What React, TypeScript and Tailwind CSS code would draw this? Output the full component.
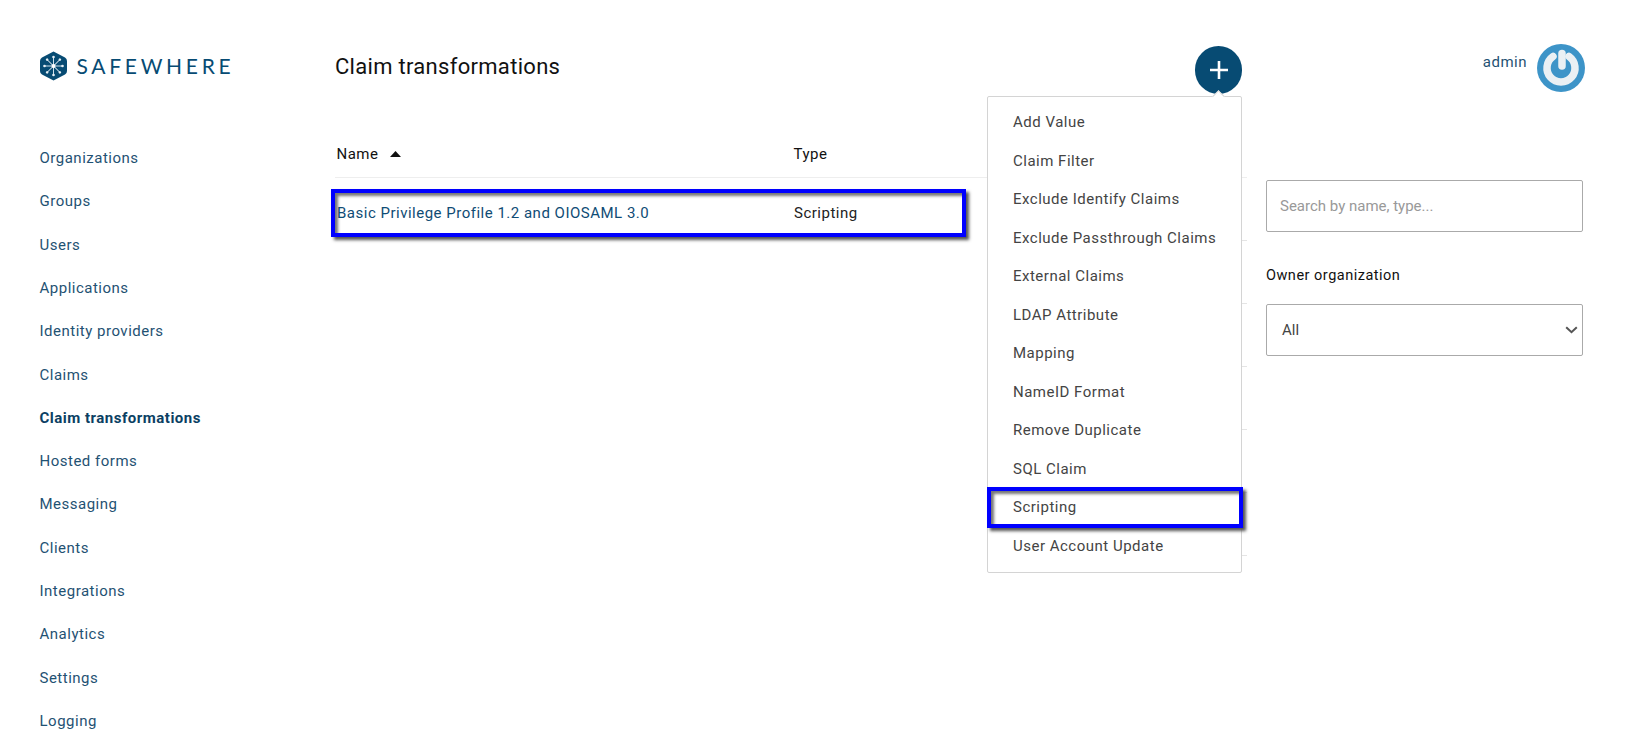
import React from "react";

const NAV = ["Organizations","Groups","Users","Applications","Identity providers","Claims","Claim transformations","Hosted forms","Messaging","Clients","Integrations","Analytics","Settings","Logging"];
const MENU = ["Add Value","Claim Filter","Exclude Identify Claims","Exclude Passthrough Claims","External Claims","LDAP Attribute","Mapping","NameID Format","Remove Duplicate","SQL Claim","Scripting","User Account Update"];
const FONT = "font-['Roboto',sans-serif]";

function Logo() {
  const spokes = [0, 45, 90, 135, 180, 225, 270, 315];
  return (
    <svg width="27" height="30" viewBox="0 0 27 30" className="shrink-0">
      <path d="M13.5 0.5 L25 6.5 Q27 7.5 27 10 L27 20 Q27 22.5 25 23.5 L13.5 29.5 L2 23.5 Q0 22.5 0 20 L0 10 Q0 7.5 2 6.5 Z" fill="#074b73" />
      {spokes.map((a) => (
        <g key={a} transform={`rotate(${a} 13.5 15)`}>
          <line x1="13.5" y1="15" x2="13.5" y2="6.5" stroke="#cfdfe9" strokeWidth="1" />
          <circle cx="13.5" cy="6" r="1.3" fill="#e6eff4" />
        </g>
      ))}
      <circle cx="13.5" cy="15" r="2" fill="#ffffff" />
    </svg>
  );
}

function Avatar() {
  return (
    <svg width="48" height="48" viewBox="0 0 48 48" className="shrink-0">
      <circle cx="24" cy="24" r="24" fill="#3d94c8" />
      <path d="M16 12.5 A14 14 0 1 0 32 12.5" fill="none" stroke="#eaf0f4" strokeWidth="7.5" strokeLinecap="round" />
      <path d="M25 9.5 L25 22" fill="none" stroke="#eaf0f4" strokeWidth="7.5" strokeLinecap="round" />
    </svg>
  );
}

export default function App() {
  return (
    <div className={`${FONT} flex h-[746px] w-[1627px] overflow-hidden bg-white text-[15px] tracking-[0.5px]`}>
      <aside className="w-[335px] shrink-0 pl-[39.5px] pt-[51px]">
        <div className="flex items-center gap-[10px]">
          <Logo />
          <span className="font-['Lato',sans-serif] text-[21px] leading-[30px] tracking-[3.7px] text-[#074b73]">SAFEWHERE</span>
        </div>
        <nav className="mt-[55.7px] flex flex-col">
          {NAV.map((n) => (
            <a key={n} className={`flex h-[43.3px] items-center ${n === "Claim transformations" ? "font-bold text-[#0b3f63]" : "text-[#1f5273]"}`}>{n}</a>
          ))}
        </nav>
      </aside>

      <main className="w-[912px] shrink-0 pt-[46px]">
        <div className="flex items-start justify-between pr-[5px]">
          <h1 className="pt-[3.5px] text-[22px] font-normal leading-[34px] tracking-[0.3px] text-[#111]">Claim transformations</h1>
          <div className="relative">
            <button className="flex h-[48px] w-[47px] items-center justify-center rounded-full bg-[#074b73] text-white">
              <svg width="20" height="20" viewBox="0 0 20 20"><path d="M10 1V19M1 10H19" stroke="#fff" strokeWidth="2.6" /></svg>
            </button>
            <div className="absolute right-0 top-[50px] z-10 w-[255px] rounded-[2px] border border-[#d4d4d4] bg-white pb-[6px] pt-[6px] text-[#444]">
              <span className="absolute right-[18px] top-[-5px] h-[9px] w-[9px] rotate-45 border-l border-t border-[#d4d4d4] bg-white" />
              {MENU.map((m) => (
                <div key={m} className="relative flex h-[38.55px] items-center pl-[25px]">
                  {m === "Scripting" && (
                    <span className="absolute left-[-1px] right-[-2px] top-[-1px] bottom-[-1px] border-[4px] border-[#0000ff] shadow-[3px_3px_3px_#555,inset_3px_3px_3px_#777]" />
                  )}
                  <span className="relative">{m}</span>
                </div>
              ))}
            </div>
          </div>
        </div>

        <div className="mt-[36px]">
          <div className="flex h-[48px] items-center border-b border-[#eeeeee] pl-[1px] pt-[1px] text-[#111]">
            <div className="flex w-[457.5px] items-center pl-[0.5px]">
              Name
              <svg width="11" height="6" viewBox="0 0 11 6" className="ml-[12px]"><path d="M5.5 0L11 6H0Z" fill="#111" /></svg>
            </div>
            <div>Type</div>
          </div>
          <div className="relative flex h-[63px] items-center pl-[1px] pt-[8px]">
            <span className="absolute left-[-4px] top-[11px] h-[48px] w-[635px] border-[4px] border-[#0000ff] shadow-[3px_3px_3px_#555,inset_3px_3px_3px_#777]" />
            <a className="relative w-[458px] pl-[1px] text-[#0f4c75]">Basic Privilege Profile 1.2 and OIOSAML 3.0</a>
            <span className="relative text-[#222]">Scripting</span>
            <span className="absolute bottom-0 right-0 w-[5px] border-b border-[#e4e4e4]" />
          </div>
          {[0, 1, 2, 3, 4].map((i) => (
            <div key={i} className="flex h-[63px] items-end justify-end">
              <div className="w-[5px] border-b border-[#e4e4e4]" />
            </div>
          ))}
        </div>
      </main>

      <section className="ml-[19px] w-[317px] shrink-0 pt-[44px]">
        <div className="flex items-start justify-end gap-[10px]">
          <span className="mt-[7px] text-[#1f5273]">admin</span>
          <span className="mr-[-2px]"><Avatar /></span>
        </div>
        <input
          readOnly
          placeholder="Search by name, type..."
          className="mt-[88px] block h-[52px] w-full rounded-[2px] border border-[#aaaaaa] px-[13px] text-[15px] tracking-normal outline-none placeholder:text-[#999]"
        />
        <label className="mt-[34px] block text-[14.5px] leading-[20px] text-[#111]">Owner organization</label>
        <div className="mt-[18px] flex h-[52px] items-center justify-between rounded-[2px] border border-[#aaaaaa] pl-[15px] pr-[4px] tracking-normal text-[#444]">
          <span>All</span>
          <svg width="13" height="8" viewBox="0 0 13 8"><path d="M1.2 1.2L6.5 6.2L11.8 1.2" fill="none" stroke="#555" strokeWidth="2" /></svg>
        </div>
      </section>
    </div>
  );
}
